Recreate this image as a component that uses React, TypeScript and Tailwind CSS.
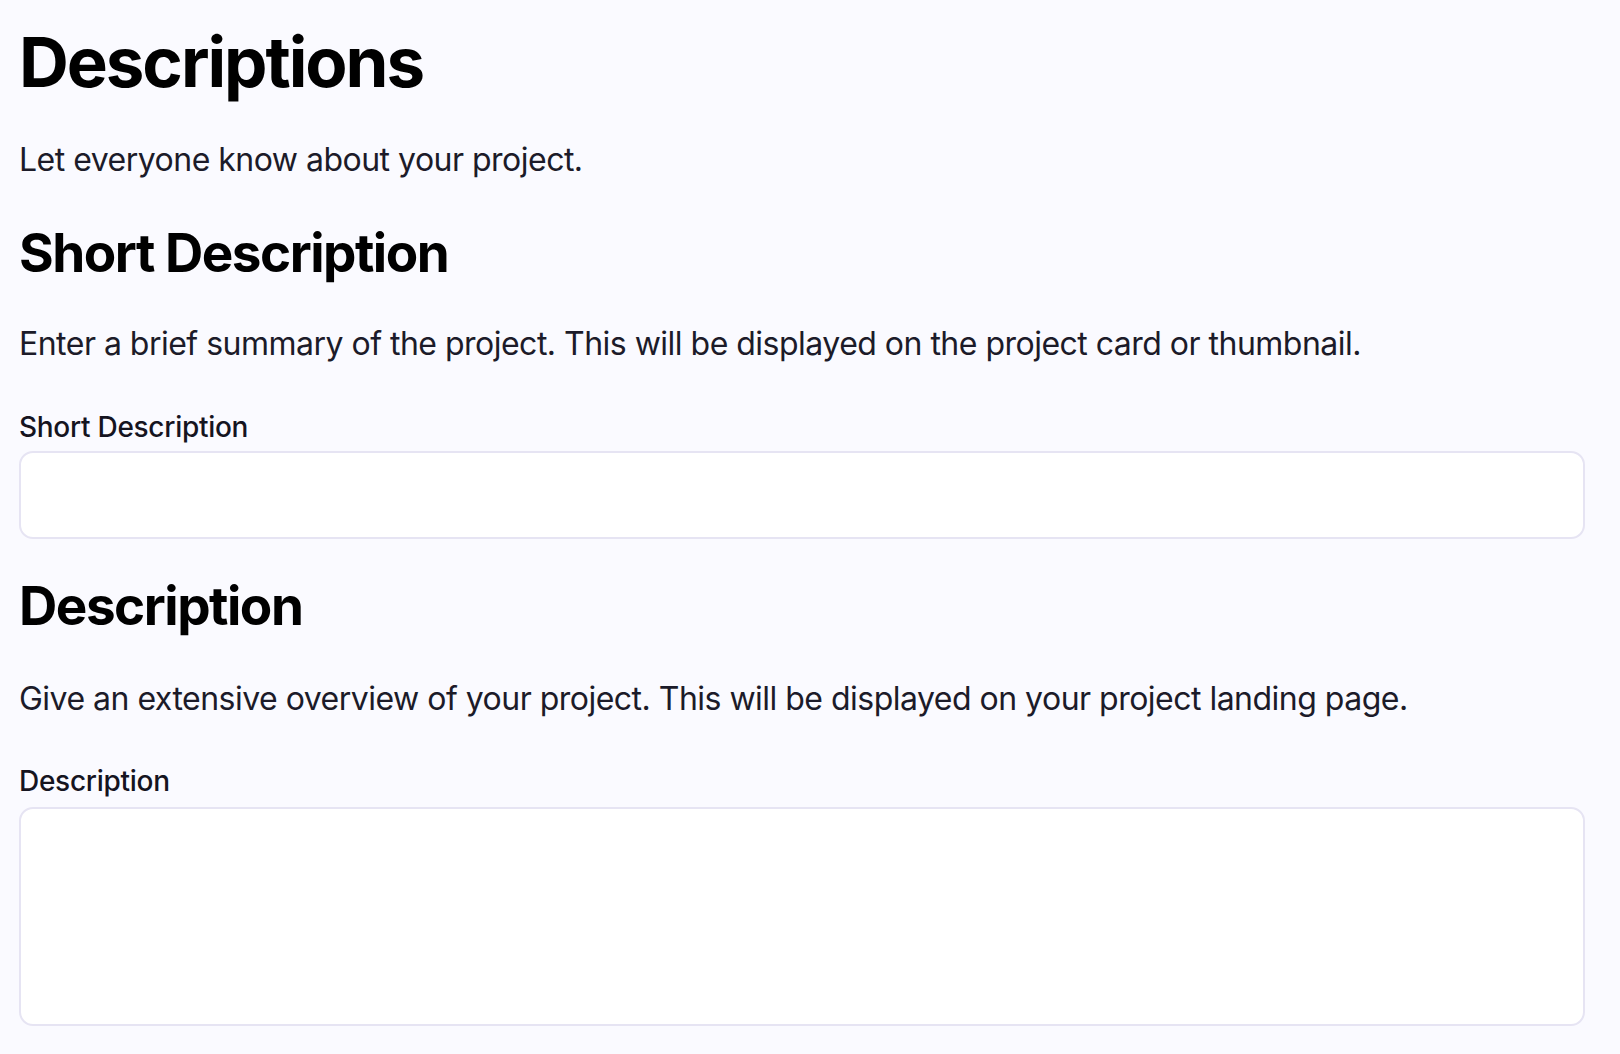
export default function App() {
  return (
    <div
      className="min-h-[1054px] bg-[#fafaff] pl-[19px] pr-[35px] pt-[22px] text-[#1c1b29]"
      style={{ fontFamily: "Inter, 'Noto Sans', sans-serif" }}
    >
      <h1 className="text-[69px] font-bold leading-[80px] tracking-[-0.03em] text-black">
        Descriptions
      </h1>
      <p className="mt-[38px] text-[32px] leading-[40px] tracking-[-0.016em]">
        Let everyone know about your project.
      </p>

      <h2 className="mt-[41px] text-[53px] font-bold leading-[64px] tracking-[-0.028em] text-black">
        Short Description
      </h2>
      <p className="mt-[39px] text-[32px] leading-[40px] tracking-[-0.016em]">
        Enter a brief summary of the project. This will be displayed on the project card or
        thumbnail.
      </p>
      <label className="mt-[46px] block text-[28px] font-medium leading-[34px] tracking-[-0.01em] text-[#15141f]">
        Short Description
      </label>
      <input
        type="text"
        className="mt-[7px] block h-[88px] w-full rounded-[14px] border-2 border-[#e6e4f3] bg-white px-4 outline-none"
      />

      <h2 className="mt-[35px] text-[53px] font-bold leading-[64px] tracking-[-0.028em] text-black">
        Description
      </h2>
      <p className="mt-[41px] text-[32px] leading-[40px] tracking-[-0.016em]">
        Give an extensive overview of your project. This will be displayed on your project landing
        page.
      </p>
      <label className="mt-[45px] block text-[28px] font-medium leading-[34px] tracking-[-0.01em] text-[#15141f]">
        Description
      </label>
      <textarea className="mt-[9px] block h-[219px] w-full resize-none rounded-[14px] border-2 border-[#e6e4f3] bg-white px-4 outline-none" />
    </div>
  );
}
